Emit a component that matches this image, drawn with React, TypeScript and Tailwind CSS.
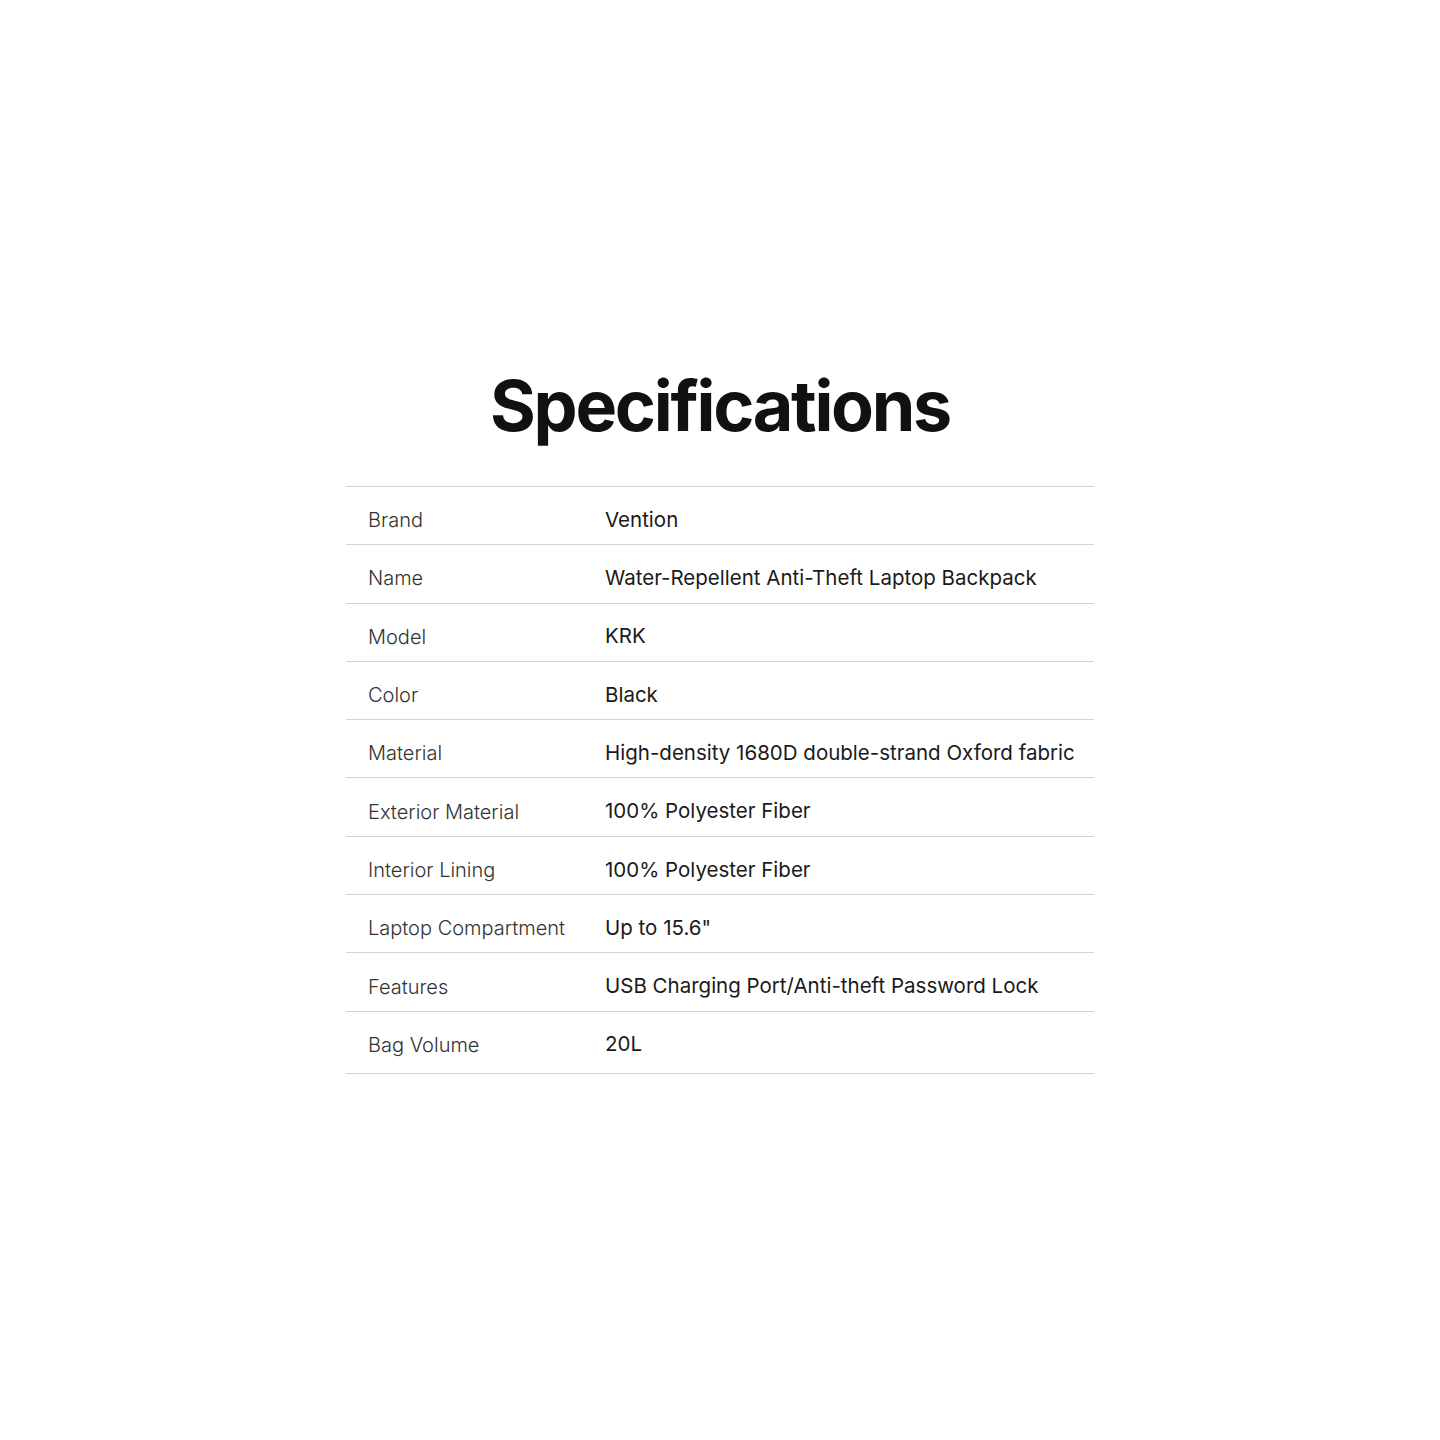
import React from "react";

const rows: [string, string][] = [
  ["Brand", "Vention"],
  ["Name", "Water-Repellent Anti-Theft Laptop Backpack"],
  ["Model", "KRK"],
  ["Color", "Black"],
  ["Material", "High-density 1680D double-strand Oxford fabric"],
  ["Exterior Material", "100% Polyester Fiber"],
  ["Interior Lining", "100% Polyester Fiber"],
  ["Laptop Compartment", 'Up to 15.6"'],
  ["Features", "USB Charging Port/Anti-theft Password Lock"],
  ["Bag Volume", "20L"],
];

export default function App() {
  return (
    <div className="w-[1440px] h-[1440px] bg-white" style={{ fontFamily: "Inter, 'Noto Sans', sans-serif" }}>
      <div className="pt-[369px] flex flex-col items-center">
        <h1 className="text-[70px] h-[74px] leading-[74px] font-bold text-[#111111] tracking-[-2.3px]">Specifications</h1>
        <div className="mt-[43px] w-[748px] border-t border-[#d4d4d4]">
          {rows.map(([k, v], i) => (
            <div
              key={k}
              className={`flex items-center pt-[9px] border-b border-[#d4d4d4] ${i === rows.length - 1 ? "h-[62px] pb-[4px]" : "h-[58.3px]"}`}
            >
              <div className="w-[259px] pl-[22px] text-[20px] font-light text-[#333333]">{k}</div>
              <div className="text-[20.5px] text-[#1a1a1a]">{v}</div>
            </div>
          ))}
        </div>
      </div>
    </div>
  );
}
